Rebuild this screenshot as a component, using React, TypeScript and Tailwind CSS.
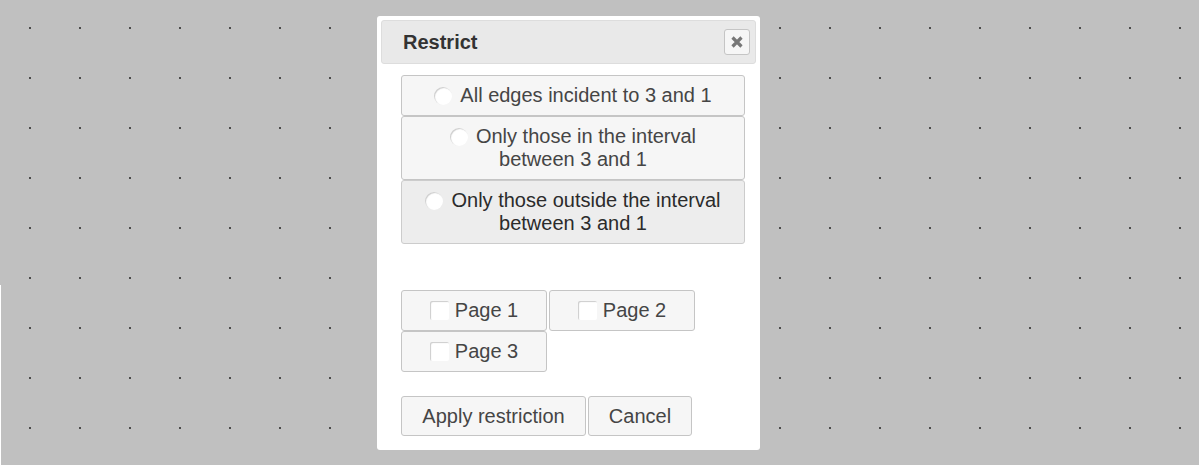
import React from 'react'

const radioOptions = [
  { label: 'All edges incident to 3 and 1', hover: false },
  { label: 'Only those in the interval between 3 and 1', hover: false },
  { label: 'Only those outside the interval between 3 and 1', hover: true },
]

const pages = ['Page 1', 'Page 2', 'Page 3']

const DotGrid = () => (
  <svg className="absolute inset-0" width="1199" height="465">
    <defs>
      <pattern id="dots" width="50" height="50" patternUnits="userSpaceOnUse">
        <rect x="29" y="27" width="2" height="2" fill="#4a4a4a" />
      </pattern>
    </defs>
    <rect width="1199" height="465" fill="url(#dots)" />
  </svg>
)

export default function App() {
  return (
    <div className="relative h-[465px] w-full overflow-hidden bg-[#c0c0c0] font-['Liberation_Sans',Arial,sans-serif]">
      <DotGrid />
      <div className="absolute left-0 top-[285px] h-[180px] w-px bg-white" />

      {/* dialog */}
      <div className="absolute left-[377px] top-[16px] h-[434px] w-[383px] rounded-[3px] bg-white p-1">
        <div className="flex h-[44px] items-center justify-between rounded-[3px] border border-[#dddddd] bg-[#e9e9e9] pl-[21px] pr-[5px]">
          <span className="text-[20px] font-bold text-[#333333]">Restrict</span>
          <button className="flex h-[26px] w-[26px] items-center justify-center rounded-[3px] border border-[#c5c5c5] bg-[#f6f6f6]">
            <svg width="12" height="12" viewBox="0 0 12 12">
              <path d="M1.5 1.5L10.5 10.5M10.5 1.5L1.5 10.5" stroke="#777777" strokeWidth="3.2" />
            </svg>
          </button>
        </div>

        <div className="pl-[20px] pt-[11px]">
          <div className="flex w-[344px] flex-col">
            {radioOptions.map((o) => (
              <label
                key={o.label}
                className={
                  o.hover
                    ? 'rounded-[3px] border border-[#cccccc] bg-[#ededed] px-[20px] py-[8px] text-center text-[20px] leading-[23px] text-[#2b2b2b]'
                    : 'rounded-[3px] border border-[#c5c5c5] bg-[#f6f6f6] px-[20px] py-[8px] text-center text-[20px] leading-[23px] text-[#454545]'
                }
              >
                <span className="mr-[8px] inline-block h-[18px] w-[18px] -translate-y-[1px] rounded-full bg-white align-middle shadow-[inset_1px_1px_1px_#cccccc]" />
                {o.label}
              </label>
            ))}
          </div>

          <div className="mt-[46px] flex w-[300px] flex-wrap gap-x-[2px]">
            {pages.map((p) => (
              <label
                key={p}
                className="flex h-[41px] w-[146px] items-center justify-center rounded-[3px] border border-[#c5c5c5] bg-[#f6f6f6] text-[20px] leading-[23px] text-[#454545]"
              >
                <span className="mr-[6px] inline-block h-[19px] w-[19px] rounded-[2px] bg-white shadow-[inset_1px_1px_1px_#cccccc]" />
                {p}
              </label>
            ))}
          </div>

          <div className="mt-[24px] flex gap-[2px]">
            <button className="h-[40px] w-[185px] rounded-[3px] border border-[#c5c5c5] bg-[#f6f6f6] text-[20px] leading-[23px] text-[#454545]">
              Apply restriction
            </button>
            <button className="h-[40px] w-[104px] rounded-[3px] border border-[#c5c5c5] bg-[#f6f6f6] text-[20px] leading-[23px] text-[#454545]">
              Cancel
            </button>
          </div>
        </div>
      </div>
    </div>
  )
}
